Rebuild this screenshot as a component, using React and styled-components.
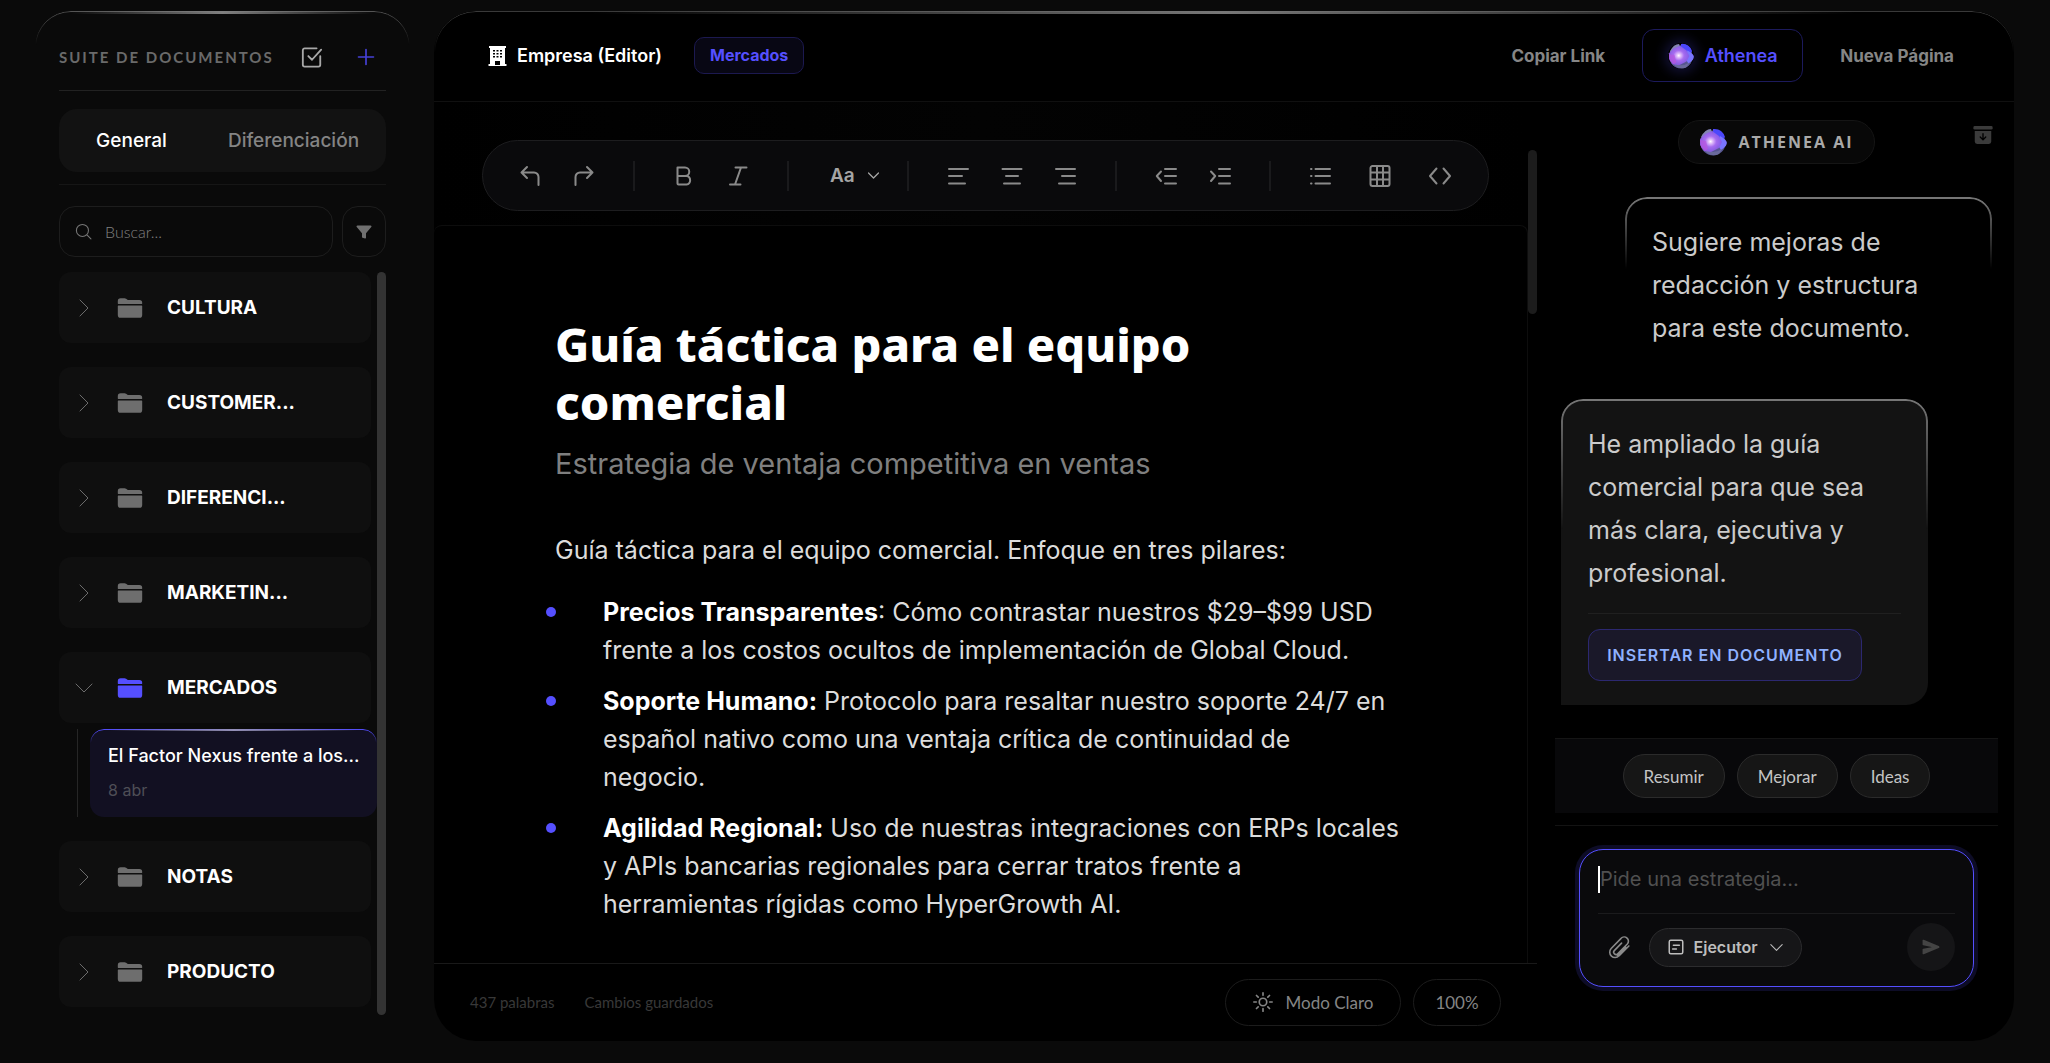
import styled, { createGlobalStyle } from "styled-components";
import { IoArchive, IoFolder, IoFunnel, IoSend } from "react-icons/io5";

const accent = "#554fff";

const GlobalStyle = createGlobalStyle`
  * {
    box-sizing: border-box;
  }
  body {
    margin: 0;
    background: #0a0a0a;
    color: #fff;
    font-family: Inter, "Liberation Sans", sans-serif;
  }
  button, input, select, textarea {
    font-family: inherit;
    color: inherit;
    background: none;
    border: none;
    padding: 0;
    margin: 0;
    outline: none;
  }
  button {
    cursor: pointer;
  }
`;

const Page = styled.div`
  display: flex;
  gap: 24px;
  height: 100vh;
  min-height: 700px;
  padding: 11px 36px 22px 35px;
`;

/* Sidebar */
const Sidebar = styled.aside`
  position: relative;
  flex: none;
  display: flex;
  flex-direction: column;
  width: 375px;
  padding: 1px 24px 26px;
  &::before {
    content: "";
    position: absolute;
    inset: 0;
    border: 1px solid #555;
    border-radius: 36px;
    mask-image: linear-gradient(#000, transparent 34px);
    pointer-events: none;
  }
  &::after {
    content: "";
    position: absolute;
    top: 0;
    left: 36px;
    right: 36px;
    height: 3px;
    background: linear-gradient(90deg, transparent, #808080, transparent);
  }
`;
const SideHeader = styled.header`
  display: flex;
  align-items: center;
  gap: 14px;
  height: 79px;
  padding-bottom: 13px;
  padding-top: 24px;
  border-bottom: 1px solid #222;
`;
const SideTitle = styled.h2`
  flex: 1;
  margin: 0;
  font-family: Lato, sans-serif;
  font-size: 15px;
  font-weight: 700;
  letter-spacing: 2px;
  white-space: nowrap;
  color: #6a6a6a;
`;
const IconButton = styled.button`
  display: flex;
  align-items: center;
  justify-content: center;
  width: ${(p) => p.$size || 40}px;
  height: ${(p) => p.$size || 40}px;
  color: ${(p) => p.$color || "#8a8a8a"};
`;
const Tabs = styled.div`
  display: grid;
  grid-template-columns: 145px 1fr;
  height: 63px;
  margin: 18px 0 12px;
  padding-right: 3px;
  border-radius: 18px;
  background: #121212;
`;
const Tab = styled.button`
  font-size: 19px;
  font-weight: 500;
  color: ${(p) => (p.$active ? "#fff" : "#848484")};
`;
const SearchRow = styled.div`
  display: flex;
  gap: 9px;
  padding-top: 21px;
  border-top: 1px solid #161616;
`;
const SearchBox = styled.label`
  flex: 1;
  display: flex;
  align-items: center;
  gap: 13px;
  height: 51px;
  padding: 0 15px;
  border: 1px solid #1d1d1d;
  border-radius: 16px;
  color: #777;
`;
const SearchInput = styled.input`
  flex: 1;
  min-width: 0;
  font-family: Lato, sans-serif;
  font-size: 16px;
  font-weight: 300;
  &::placeholder {
    color: #808080;
  }
`;
const FilterButton = styled.button`
  display: flex;
  align-items: center;
  justify-content: center;
  width: 44px;
  height: 51px;
  border: 1px solid #1d1d1d;
  border-radius: 16px;
  color: #707070;
`;
const ListArea = styled.div`
  flex: 1;
  display: flex;
  gap: 6px;
  min-height: 0;
  margin-top: 15px;
`;
const FolderList = styled.ul`
  flex: 1;
  min-width: 0;
  margin: 0;
  padding: 0;
  list-style: none;
  display: flex;
  flex-direction: column;
  gap: 24px;
`;
const Scrollbar = styled.div`
  flex: none;
  width: 9px;
  border-radius: 5px;
  background: #333;
`;
const FolderButton = styled.button`
  display: flex;
  align-items: center;
  width: 100%;
  height: 71px;
  padding-left: 13px;
  border-radius: 12px;
  background: #0f0f0f;
  color: ${(p) => (p.$open ? accent : "#6e6e6e")};
`;
const FolderName = styled.span`
  margin-left: 24px;
  font-size: 19px;
  font-weight: 700;
  color: #fff;
`;
const ChevronBox = styled.span`
  display: flex;
  margin-right: 21px;
  color: #6c6c6c;
`;
const Children = styled.div`
  margin: 6px -6px 0 18px;
  padding-left: 12px;
  border-left: 1px solid #262626;
`;
const DocItem = styled.button`
  position: relative;
  display: flex;
  flex-direction: column;
  justify-content: center;
  gap: 9px;
  width: 100%;
  height: 88px;
  padding: 0 14px 1px 18px;
  border-radius: 14px;
  background: #121022;
  text-align: left;
  &::before {
    content: "";
    position: absolute;
    inset: 0;
    border: 1px solid ${accent};
    border-radius: 14px;
    mask-image: linear-gradient(#000, transparent 14px);
  }
  &::after {
    content: "";
    position: absolute;
    top: 0;
    left: 20px;
    right: 20px;
    height: 2px;
    background: linear-gradient(90deg, transparent, #9490b8, transparent);
  }
`;
const DocTitle = styled.span`
  font-size: 18px;
  line-height: 26px;
  font-weight: 500;
  white-space: nowrap;
`;
const DocDate = styled.span`
  font-size: 16px;
  line-height: 24px;
  color: #4e4e56;
`;

/* Main panel */
const Main = styled.main`
  position: relative;
  flex: 1;
  min-width: 0;
  display: flex;
  flex-direction: column;
  border-radius: 42px;
  background: #000;
  overflow: hidden;
  &::before {
    content: "";
    position: absolute;
    inset: 0;
    border: 1px solid #3a3a3a;
    border-radius: 42px;
    mask-image: linear-gradient(#000, transparent 42px);
    pointer-events: none;
  }
  &::after {
    content: "";
    position: absolute;
    top: 0;
    left: 10%;
    right: 10%;
    height: 3px;
    background: linear-gradient(90deg, transparent, #777, transparent);
  }
`;
const TopBar = styled.header`
  flex: none;
  display: flex;
  align-items: center;
  height: 91px;
  padding: 0 60px 1px 54px;
  border-bottom: 1px solid #101010;
`;
const Brand = styled.h1`
  display: flex;
  align-items: center;
  gap: 10px;
  margin: 0 32px 0 0;
  font-size: 18px;
  font-weight: 600;
  white-space: nowrap;
`;
const Badge = styled.span`
  padding: 0 15px;
  border: 1px solid #1c1950;
  border-radius: 10px;
  background: #080714;
  font-size: 16px;
  line-height: 35px;
  font-weight: 700;
  color: ${accent};
`;
const Spacer = styled.div`
  flex: 1;
`;
const NavLink = styled.a`
  font-size: 17px;
  font-weight: 700;
  white-space: nowrap;
  text-decoration: none;
  color: #868686;
`;
const AtheneaButton = styled.button`
  display: flex;
  align-items: center;
  justify-content: center;
  gap: 11px;
  width: 161px;
  height: 53px;
  margin: 0 37px;
  border: 1px solid #1c1a5c;
  border-radius: 12px;
  font-size: 18px;
  font-weight: 600;
  color: ${accent};
`;
const OrbSvg = styled.svg`
  flex: none;
  border-radius: 50%;
  box-shadow: ${(p) => (p.$glow ? "0 0 12px 4px rgba(85, 79, 255, 0.2)" : "none")};
`;
const Body = styled.div`
  flex: 1;
  min-height: 0;
  display: flex;
`;

/* Editor */
const Editor = styled.section`
  flex: 1;
  min-width: 0;
  display: flex;
  flex-direction: column;
`;
const EditorArea = styled.div`
  flex: 1;
  min-height: 0;
  display: flex;
`;
const Canvas = styled.div`
  flex: 1;
  min-width: 0;
  display: flex;
  flex-direction: column;
  background: linear-gradient(90deg, #000, #030303, #000);
`;
const EditorTrack = styled.div`
  flex: none;
  width: 9px;
  padding-top: 48px;
`;
const EditorThumb = styled.div`
  height: 164px;
  border-radius: 5px;
  background: #1c1c1c;
`;
const Toolbar = styled.div`
  flex: none;
  display: flex;
  align-items: center;
  height: 71px;
  margin: 38px 39px 14px 48px;
  padding: 0 20px;
  border: 1px solid #1d1d1f;
  border-radius: 36px;
  background: #0a0a0c;
`;
const Tools = styled.div`
  display: flex;
  gap: ${(p) => p.$gap || 0}px;
`;
const Separator = styled.span`
  width: 2px;
  height: 30px;
  margin: 0 22px;
  background: #1a1a1c;
`;
const StyleSelect = styled.label`
  display: flex;
  align-items: center;
  gap: 11px;
  width: 74px;
  padding-left: 19px;
  color: #a5a5a5;
  select {
    appearance: none;
    font-size: 19px;
    font-weight: 600;
  }
`;
const Sheet = styled.article`
  flex: 1;
  min-height: 0;
  overflow: hidden;
  padding: 89px 121px 0;
  border: 1px solid #0d0d0d;
  border-width: 1px 1px 0 0;
  border-radius: 8px 8px 0 0;
  background: #000;
`;
const DocHeading = styled.h2`
  margin: 0;
  font-family: "Noto Sans", sans-serif;
  font-size: 47px;
  line-height: 58px;
  font-weight: 800;
`;
const Subtitle = styled.p`
  margin: 15px 0 49px;
  font-size: 29px;
  line-height: 36px;
  color: #7f7f7f;
`;
const Paragraph = styled.p`
  margin: 0 0 24px;
  font-size: 25px;
  line-height: 38px;
  color: #dcdcdc;
`;
const Bullets = styled.ul`
  display: flex;
  flex-direction: column;
  gap: 13px;
  margin: 0;
  padding: 0;
  list-style: none;
`;
const Bullet = styled.li`
  display: flex;
  gap: 47px;
  margin-left: -9px;
  font-size: 25px;
  line-height: 38px;
  white-space: pre-line;
  color: #dcdcdc;
  &::before {
    content: "";
    flex: none;
    width: 10px;
    height: 10px;
    margin-top: 14px;
    border-radius: 50%;
    background: ${accent};
  }
  strong {
    color: #fff;
  }
`;
const Footer = styled.footer`
  flex: none;
  display: flex;
  align-items: center;
  gap: 12px;
  height: 78px;
  padding: 0 36px 1px;
  border-top: 1px solid #191919;
  font-family: Lato, sans-serif;
`;
const Status = styled.span`
  margin-right: 18px;
  font-size: 15px;
  color: #383838;
`;
const FooterButton = styled.button`
  display: flex;
  align-items: center;
  justify-content: center;
  gap: 13px;
  width: ${(p) => p.$width}px;
  height: 47px;
  border: 1px solid #1c1c1c;
  border-radius: 24px;
  font-size: 17px;
  color: #858585;
`;

/* Chat */
const Chat = styled.aside`
  flex: none;
  display: flex;
  flex-direction: column;
  width: 477px;
  padding: 18px 16px 54px 18px;
`;
const ChatHeader = styled.header`
  display: grid;
  grid-template-columns: 1fr auto 1fr;
  margin-bottom: 33px;
`;
const ChatTitle = styled.h2`
  grid-column: 2;
  display: flex;
  align-items: center;
  justify-content: center;
  gap: 11px;
  width: 197px;
  height: 44px;
  margin: 0;
  border: 1px solid #151515;
  border-radius: 22px;
  background: #080808;
  font-family: "Open Sans", sans-serif;
  font-size: 16px;
  font-weight: 700;
  letter-spacing: 2px;
  white-space: nowrap;
  color: #a9a9a9;
`;
const ArchiveButton = styled.button`
  justify-self: end;
  align-self: start;
  display: flex;
  padding: 4px 4px 0 0;
  color: #3b3b3b;
`;
const Messages = styled.div`
  flex: 1;
  min-height: 0;
  display: flex;
  flex-direction: column;
  gap: 25px;
  padding: 0 6px;
`;
const Bubble = styled.div`
  position: relative;
  align-self: ${(p) => (p.$mine ? "flex-end" : "flex-start")};
  width: 367px;
  padding: 24px 27px;
  border-radius: ${(p) => (p.$mine ? "22px 22px 0 22px" : "22px 22px 22px 0")};
  background: ${(p) => (p.$mine ? "#000" : "#131313")};
  &::before {
    content: "";
    position: absolute;
    inset: 0;
    border: 2px solid #777;
    border-radius: inherit;
    mask-image: linear-gradient(#000, transparent ${(p) => (p.$mine ? 72 : 130)}px);
    pointer-events: none;
  }
`;
const BubbleText = styled.p`
  margin: 0;
  font-size: 25px;
  line-height: 43px;
  color: #cbcbcb;
`;
const BubbleActions = styled.div`
  margin-top: 18px;
  padding-top: 15px;
  border-top: 1px solid #202020;
`;
const InsertButton = styled.button`
  display: block;
  width: 274px;
  height: 52px;
  border: 1px solid #2c2870;
  border-radius: 12px;
  background: #1a1829;
  font-size: 16px;
  font-weight: 600;
  letter-spacing: 1px;
  white-space: nowrap;
  color: #8fb1ff;
`;
const Suggestions = styled.div`
  display: flex;
  align-items: center;
  justify-content: center;
  gap: 12px;
  height: 75px;
  margin-bottom: 12px;
  border-top: 1px solid #151515;
  background: #08080a;
`;
const Chip = styled.button`
  height: 44px;
  padding: 0 20px;
  border: 1px solid #2b2b2b;
  border-radius: 22px;
  background: #161616;
  font-family: Lato, sans-serif;
  font-size: 17px;
  color: #c4c4c4;
`;
const ComposerWrap = styled.form`
  padding: 23px 24px 0;
  border-top: 1px solid #131313;
`;
const Composer = styled.div`
  padding: 9px 18px 15px;
  border: 1px solid ${accent};
  border-radius: 24px;
  background: #0a0a0c;
  box-shadow: 0 0 0 4px #0d0c26;
`;
const InputLine = styled.label`
  display: flex;
  align-items: center;
  padding-bottom: 14px;
  border-bottom: 1px solid #1b1b1d;
`;
const Caret = styled.span`
  width: 2px;
  height: 27px;
  background: #fff;
`;
const Prompt = styled.textarea`
  flex: 1;
  height: 40px;
  font-size: 20px;
  line-height: 40px;
  resize: none;
  overflow: hidden;
  &::placeholder {
    color: #505050;
  }
`;
const ComposerTools = styled.div`
  display: flex;
  align-items: center;
  gap: 9px;
  padding-top: 9px;
`;
const ModeSelect = styled.label`
  display: flex;
  align-items: center;
  justify-content: center;
  gap: 9px;
  width: 153px;
  height: 39px;
  border: 1px solid #2c2c2e;
  border-radius: 20px;
  background: #161618;
  color: #bdbdbd;
  select {
    appearance: none;
    font-size: 16px;
    font-weight: 600;
  }
`;
const SendButton = styled.button`
  display: flex;
  align-items: center;
  justify-content: center;
  width: 48px;
  height: 48px;
  margin-left: auto;
  border-radius: 50%;
  background: #151517;
  color: #444;
`;

const glyphs = {
  undo: "M9 3 3.500 8.500 9 14M3.500 8.500H16a4.500 4.500 0 0 1 4.500 4.500v8",
  redo: "M15 3l5.500 5.500L15 14M20.500 8.500H8A4.500 4.500 0 0 0 3.500 13v8",
  bold: "M5.500 3.500h7.500a4.200 4.200 0 0 1 0 8.500H5.500zM5.500 12h9a4.300 4.300 0 0 1 0 8.500H6.500a1 1 0 0 1-1-1V3.500",
  italic: "M9.500 3.500h11M4 20.500h10.500M15 3.500 9 20.500",
  left: "M3 5h19M3 12h13M3 19.500h16",
  center: "M2.500 5h19M6 12h12M4 19.500h16",
  right: "M2 5h19M8 12h13M5 19.500h16",
  outdent: "M11 5h11M11 12h11M11 19.500h11M7 7.500 2.800 12 7 17",
  indent: "M11 5h11M11 12h11M11 19.500h11M3 7.500 7.200 12 3 17",
  list: "M7.500 5H22M7.500 12H22M7.500 19.500H22M3 5h.5M3 12h.5M3 19.500h.5",
  table:
    "M4.500 2h15a2 2 0 0 1 2 2v16a2 2 0 0 1-2 2h-15a2 2 0 0 1-2-2V4a2 2 0 0 1 2-2zM2.500 8.500h19M2.500 15.500h19M9 2v20M15 2v20",
  code: "M8.500 4.500 2 12l6.500 7.500M15.500 4.500 22 12l-6.500 7.500",
  check: "M17 2.500H4a2 2 0 0 0-2 2v16a2 2 0 0 0 2 2h15a2 2 0 0 0 2-2V11M8 11l4 4L22 4",
  plus: "M12 3v18M3 12h18",
  chevronRight: "M8 4l8 8-8 8",
  chevronDown: "M4 8l8 8 8-8",
  search: "M10.500 2a8.500 8.500 0 1 0 0 17 8.500 8.500 0 0 0 0-17zM16.500 16.500l6 6",
  clip: "M21 10.500l-9.500 9.500a5 5 0 0 1-7.500-7l9.500-9.800a4 4 0 0 1 6 5.500l-9.200 9.300a2.200 2.200 0 0 1-3.300-3l7-7.200M18 11.500l-8 8",
  note: "M5 3h14a2 2 0 0 1 2 2v14a2 2 0 0 1-2 2H5a2 2 0 0 1-2-2V5a2 2 0 0 1 2-2zM8.500 9.500h8M7.500 14.500h5",
  sun: "M12 7.500a4.500 4.500 0 1 0 0 9 4.500 4.500 0 0 0 0-9zM12 1v3M12 20v3M1 12h3M20 12h3M4.200 4.200l2 2M17.800 17.800l2 2M4.200 19.800l2-2M17.800 6.200l2-2",
};

function Glyph({ name, size = 24, stroke = 2 }) {
  return (
    <svg
      width={size}
      height={size}
      viewBox="0 0 24 24"
      fill="none"
      stroke="currentColor"
      strokeWidth={stroke}
      strokeLinecap="round"
      strokeLinejoin="round"
      aria-hidden="true"
    >
      <path d={glyphs[name]} />
    </svg>
  );
}

function Building() {
  return (
    <svg width="19" height="22" viewBox="0 0 19 22" aria-hidden="true">
      <path fill="#fff" d="M1 1h17v2h-1v16h1.500v2H.500v-2H2V3H1z" />
      <path
        fill="#000"
        d="M5 5h2v1.500H5zM8.500 5h2v1.500h-2zM12 5h2v1.500h-2zM5 8h2v1.500H5zM8.500 8h2v1.500h-2zM12 8h2v1.500h-2zM5 11h2v1.500H5zM8.500 11h2v1.500h-2zM12 11h2v1.500h-2zM7 16h5v4H7z"
      />
    </svg>
  );
}

function Orb({ size, glow }) {
  const id = `orb-${size}`;
  return (
    <OrbSvg $glow={glow} width={size} height={size} viewBox="0 0 28 28" aria-hidden="true">
      <defs>
        <radialGradient id={id} cx="48%" cy="50%" r="52%">
          <stop offset="0" stopColor="#fff" />
          <stop offset="0.18" stopColor="#e2c0fa" />
          <stop offset="0.5" stopColor="#a76cf0" />
          <stop offset="1" stopColor="#8559e6" stopOpacity="0.9" />
        </radialGradient>
      </defs>
      <circle cx="14" cy="15" r="12.500" fill="#565690" />
      <path d="M2 9q4-8 10-8l2 8-8 6z" fill="#8484b4" />
      <path d="M14 1q9-1 12 8l-4 5-8-6z" fill="#4c47fb" />
      <path d="M21 8q7 4 7 7t-6 7l-4-6z" fill="#7975ff" />
      <path d="M5 21q9 6 18 0l-3 5q-6 3-12-1z" fill="#6a6a9c" />
      <path d="M1 11l5-5 7-3 7 5 3 6-3 6-8 4-7-1-4-6z" fill={`url(#${id})`} />
      <path d="M1 12l6 1 2 8-3 2-4-4z" fill="#b957df" opacity="0.7" />
    </OrbSvg>
  );
}

const folders = [
  { name: "CULTURA" },
  { name: "CUSTOMER..." },
  { name: "DIFERENCI..." },
  { name: "MARKETIN..." },
  { name: "MERCADOS", docs: [{ title: "El Factor Nexus frente a los...", date: "8 abr" }] },
  { name: "NOTAS" },
  { name: "PRODUCTO" },
];

const points = [
  {
    title: "Precios Transparentes",
    text: ": Cómo contrastar nuestros $29–$99 USD\nfrente a los costos ocultos de implementación de Global Cloud.",
  },
  {
    title: "Soporte Humano:",
    text: " Protocolo para resaltar nuestro soporte 24/7 en\nespañol nativo como una ventaja crítica de continuidad de\nnegocio.",
  },
  {
    title: "Agilidad Regional:",
    text: " Uso de nuestras integraciones con ERPs locales\ny APIs bancarias regionales para cerrar tratos frente a\nherramientas rígidas como HyperGrowth AI.",
  },
];

function ToolGroup({ items, gap }) {
  return (
    <Tools $gap={gap}>
      {items.map(([name, label]) => (
        <IconButton key={name} type="button" $size={54} aria-label={label}>
          <Glyph name={name} />
        </IconButton>
      ))}
    </Tools>
  );
}

function Folder({ folder }) {
  const open = Boolean(folder.docs);
  return (
    <li>
      <FolderButton type="button" $open={open} aria-expanded={open}>
        <ChevronBox>
          <Glyph name={open ? "chevronDown" : "chevronRight"} stroke={1} />
        </ChevronBox>
        <IoFolder size={26} />
        <FolderName>{folder.name}</FolderName>
      </FolderButton>
      {open && (
        <Children>
          {folder.docs.map((doc) => (
            <DocItem key={doc.title} type="button">
              <DocTitle>{doc.title}</DocTitle>
              <DocDate>{doc.date}</DocDate>
            </DocItem>
          ))}
        </Children>
      )}
    </li>
  );
}

function DocumentSidebar() {
  return (
    <Sidebar>
      <SideHeader>
        <SideTitle>SUITE DE DOCUMENTOS</SideTitle>
        <IconButton type="button" aria-label="Seleccionar" $color="#a8a8a8">
          <Glyph name="check" size={22} />
        </IconButton>
        <IconButton type="button" aria-label="Nuevo documento" $color="#4641d8">
          <Glyph name="plus" size={20} />
        </IconButton>
      </SideHeader>
      <Tabs>
        <Tab type="button" $active>
          General
        </Tab>
        <Tab type="button">Diferenciación</Tab>
      </Tabs>
      <SearchRow>
        <SearchBox>
          <Glyph name="search" size={17} stroke={1.5} />
          <SearchInput type="text" placeholder="Buscar..." aria-label="Buscar" />
        </SearchBox>
        <FilterButton type="button" aria-label="Filtrar">
          <IoFunnel size={16} />
        </FilterButton>
      </SearchRow>
      <ListArea>
        <FolderList>
          {folders.map((folder) => (
            <Folder key={folder.name} folder={folder} />
          ))}
        </FolderList>
        <Scrollbar />
      </ListArea>
    </Sidebar>
  );
}

function EditorPane() {
  return (
    <Editor>
      <EditorArea>
        <Canvas>
          <Toolbar>
            <ToolGroup
              items={[
                ["undo", "Deshacer"],
                ["redo", "Rehacer"],
              ]}
            />
            <Separator />
            <ToolGroup
              items={[
                ["bold", "Negrita"],
                ["italic", "Cursiva"],
              ]}
            />
            <Separator />
            <StyleSelect>
              <select aria-label="Estilo de texto">
                <option>Aa</option>
              </select>
              <Glyph name="chevronDown" size={15} stroke={2} />
            </StyleSelect>
            <Separator />
            <ToolGroup
              items={[
                ["left", "Alinear a la izquierda"],
                ["center", "Centrar"],
                ["right", "Alinear a la derecha"],
              ]}
            />
            <Separator />
            <ToolGroup
              items={[
                ["outdent", "Reducir sangría"],
                ["indent", "Aumentar sangría"],
              ]}
            />
            <Separator />
            <ToolGroup
              gap={6}
              items={[
                ["list", "Lista"],
                ["table", "Tabla"],
                ["code", "Código"],
              ]}
            />
          </Toolbar>
          <Sheet>
            <DocHeading>Guía táctica para el equipo comercial</DocHeading>
            <Subtitle>Estrategia de ventaja competitiva en ventas</Subtitle>
            <Paragraph>
              Guía táctica para el equipo comercial. Enfoque en tres pilares:
            </Paragraph>
            <Bullets>
              {points.map((point) => (
                <Bullet key={point.title}>
                  <div>
                    <strong>{point.title}</strong>
                    {point.text}
                  </div>
                </Bullet>
              ))}
            </Bullets>
          </Sheet>
        </Canvas>
        <EditorTrack>
          <EditorThumb />
        </EditorTrack>
      </EditorArea>
      <Footer>
        <Status>437 palabras</Status>
        <Status>Cambios guardados</Status>
        <Spacer />
        <FooterButton type="button" $width={176}>
          <Glyph name="sun" size={20} />
          Modo Claro
        </FooterButton>
        <FooterButton type="button" $width={88}>
          100%
        </FooterButton>
      </Footer>
    </Editor>
  );
}

function ChatPane() {
  return (
    <Chat>
      <ChatHeader>
        <ChatTitle>
          <Orb size={28} />
          ATHENEA AI
        </ChatTitle>
        <ArchiveButton type="button" aria-label="Archivar conversación">
          <IoArchive size={22} />
        </ArchiveButton>
      </ChatHeader>
      <Messages>
        <Bubble $mine>
          <BubbleText>Sugiere mejoras de redacción y estructura para este documento.</BubbleText>
        </Bubble>
        <Bubble>
          <BubbleText>
            He ampliado la guía comercial para que sea más clara, ejecutiva y profesional.
          </BubbleText>
          <BubbleActions>
            <InsertButton type="button">INSERTAR EN DOCUMENTO</InsertButton>
          </BubbleActions>
        </Bubble>
      </Messages>
      <Suggestions>
        <Chip type="button">Resumir</Chip>
        <Chip type="button">Mejorar</Chip>
        <Chip type="button">Ideas</Chip>
      </Suggestions>
      <ComposerWrap onSubmit={(e) => e.preventDefault()}>
        <Composer>
          <InputLine>
            <Caret />
            <Prompt rows={1} placeholder="Pide una estrategia..." aria-label="Mensaje" />
          </InputLine>
          <ComposerTools>
            <IconButton type="button" $size={42} aria-label="Adjuntar archivo">
              <Glyph name="clip" size={25} stroke={1.5} />
            </IconButton>
            <ModeSelect>
              <Glyph name="note" size={18} />
              <select aria-label="Modo">
                <option>Ejecutor</option>
              </select>
              <Glyph name="chevronDown" size={17} stroke={1.5} />
            </ModeSelect>
            <SendButton type="submit" aria-label="Enviar">
              <IoSend size={18} />
            </SendButton>
          </ComposerTools>
        </Composer>
      </ComposerWrap>
    </Chat>
  );
}

function App() {
  return (
    <>
      <GlobalStyle />
      <Page>
        <DocumentSidebar />
        <Main>
          <TopBar>
            <Brand>
              <Building />
              Empresa (Editor)
            </Brand>
            <Badge>Mercados</Badge>
            <Spacer />
            <NavLink href="#copiar">Copiar Link</NavLink>
            <AtheneaButton type="button">
              <Orb size={26} glow />
              Athenea
            </AtheneaButton>
            <NavLink href="#nueva">Nueva Página</NavLink>
          </TopBar>
          <Body>
            <EditorPane />
            <ChatPane />
          </Body>
        </Main>
      </Page>
    </>
  );
}

export default App;
